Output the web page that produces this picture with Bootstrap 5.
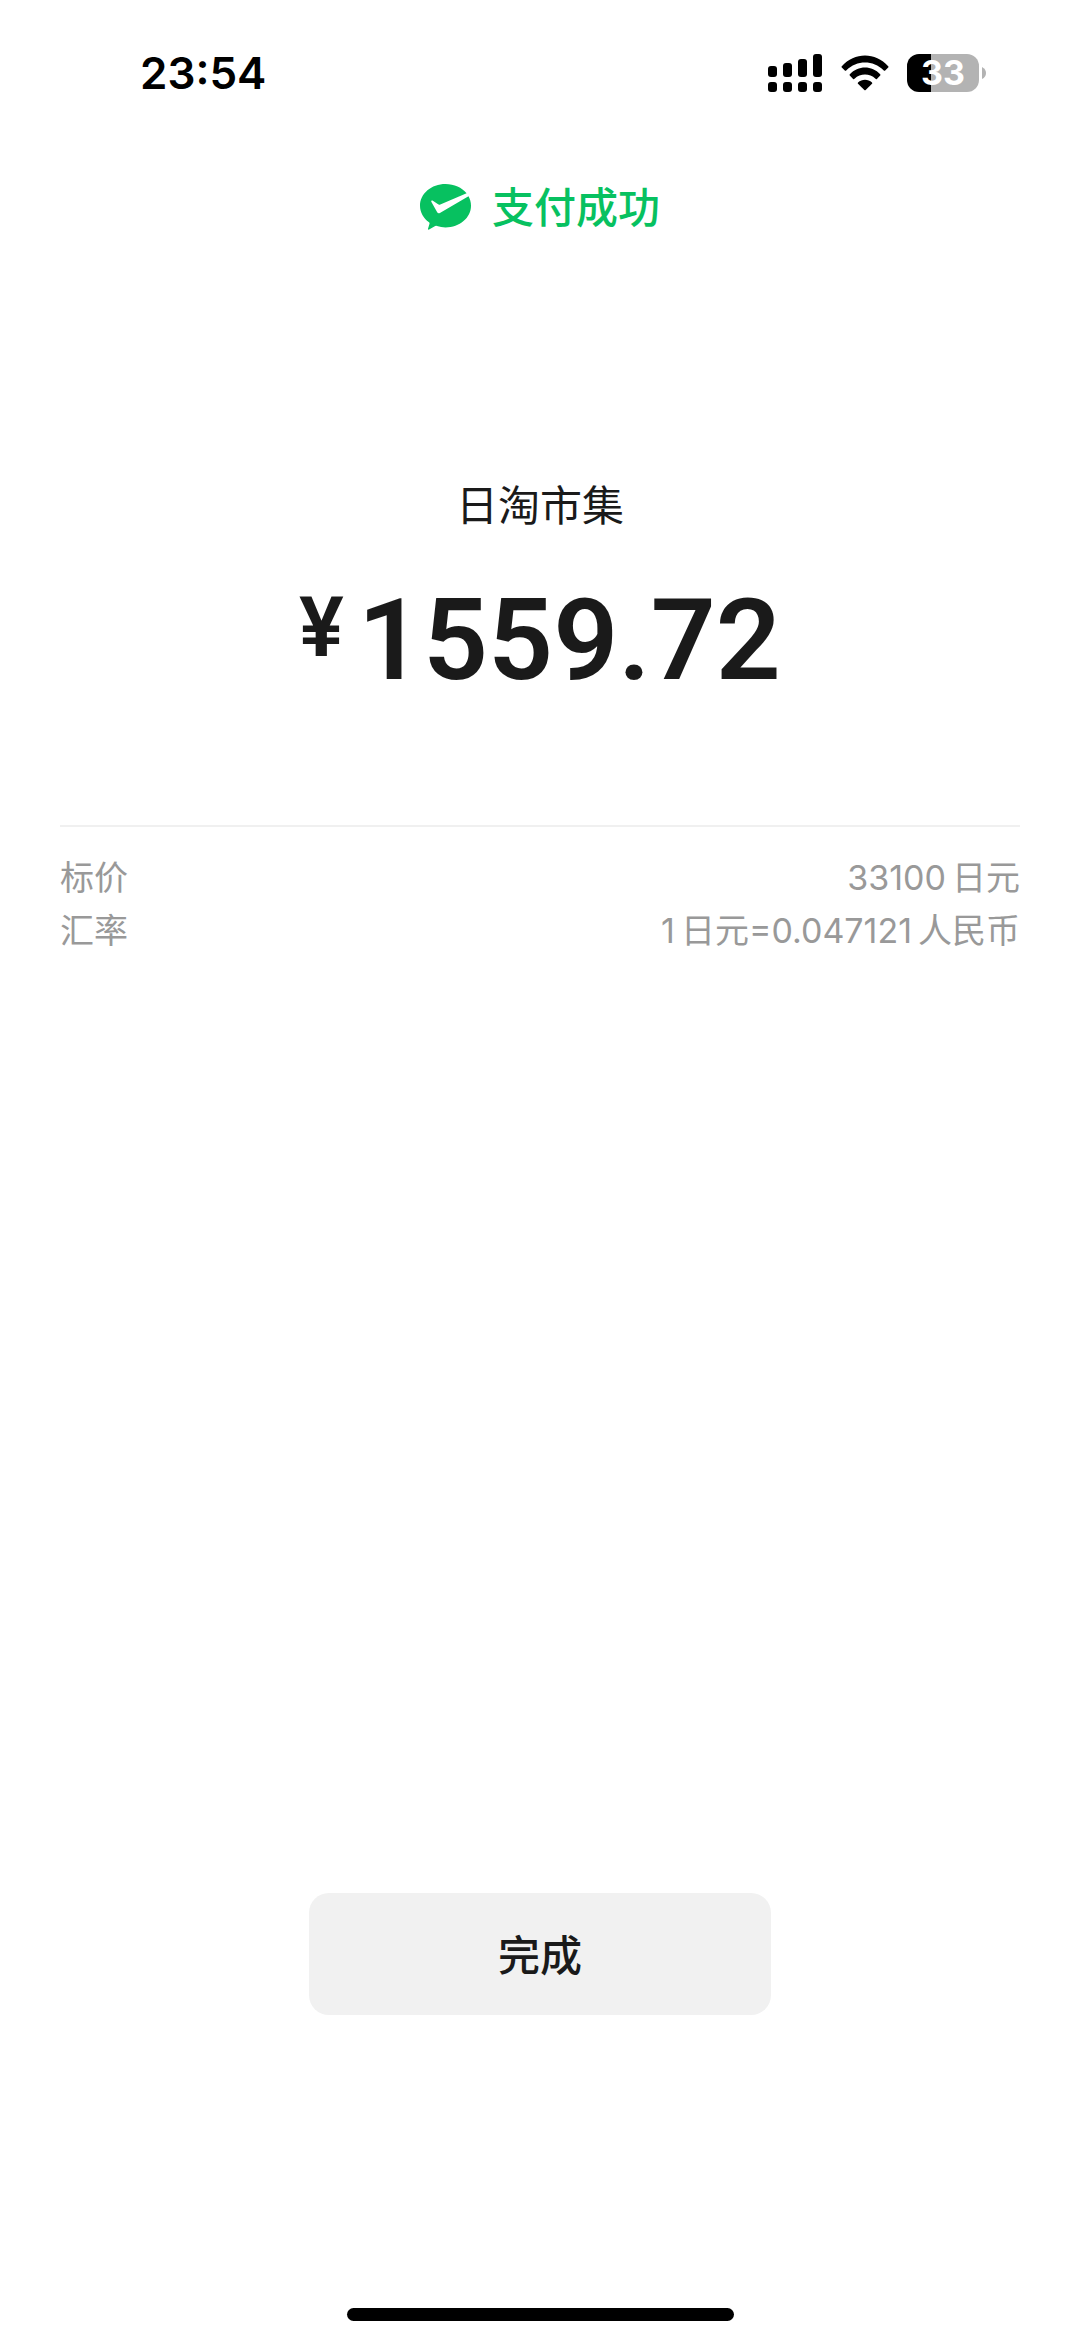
<!DOCTYPE html>
<html lang="zh-CN">
<head>
<meta charset="utf-8">
<meta name="viewport" content="width=device-width, initial-scale=1">
<title>支付成功</title>
<link href="https://cdn.jsdelivr.net/npm/bootstrap@5.3.0/dist/css/bootstrap.min.css" rel="stylesheet">
<style>
  body { font-family: Inter, "Noto Sans CJK SC", sans-serif; color: #1a1a1a; background: #fff; }
  .status-bar { height: 146px; padding: 0 94px 0 140px; color: #000; }
  .status-time { font-size: 44px; line-height: 60px; font-weight: 600; }
  .status-icons { gap: 18px; }
  .battery-cell { width: 72px; height: 38px; border-radius: 12px; color: #fff; font-size: 34px; line-height: 38px; font-weight: 700;
    background: linear-gradient(90deg, #000 24px, #b3b3b3 24px); }
  .pay-state { margin-top: 32px; gap: 21px; color: #07c160; font-size: 42px; line-height: 60px; font-weight: 500; }
  .pay-state svg { margin-bottom: 3px; }
  .merchant { margin-top: 238px; font-size: 42px; line-height: 60px; font-weight: 400; }
  .amount { margin-top: 42px; gap: 14px; font-family: Roboto, sans-serif; font-weight: 600; }
  .amount-sign { font-size: 84px; line-height: 100px; }
  .amount-value { font-size: 114px; line-height: 124px; }
  .pay-details { margin: 123px 60px 0; padding-top: 24px; border-top: 2px solid #f0f0f0; color: #999; font-size: 34px; line-height: 53px; }
  .pay-details dt, .pay-details dd { font-weight: 400; margin: 0; }
  .pay-details dd { display: flex; gap: 6px; }
  .btn-done { width: 462px; height: 122px; margin-bottom: 293px; padding: 8px 0 4px; border: 0; border-radius: 20px; font-size: 42px; line-height: 60px; font-weight: 500;
    --bs-btn-bg: #f1f1f1; --bs-btn-color: #1a1a1a; --bs-btn-hover-bg: #e6e6e6; --bs-btn-active-bg: #dedede; }
  .home-bar { width: 387px; height: 13px; margin-bottom: 20px; background: #000; }
</style>
</head>
<body>
<div class="d-flex flex-column min-vh-100">
  <header class="status-bar d-flex align-items-center justify-content-between">
    <time class="status-time">23:54</time>
    <div class="status-icons d-flex align-items-center">
      <svg width="55" height="38" viewBox="0 0 55 38" role="img" aria-label="信号">
        <rect x="0" y="12" width="9" height="11" rx="3"/><rect x="15" y="9" width="9" height="14" rx="3"/>
        <rect x="30" y="5" width="9" height="18" rx="3"/><rect x="45" y="0" width="9" height="23" rx="3"/>
        <rect x="0" y="28" width="9" height="10" rx="3"/><rect x="15" y="28" width="9" height="10" rx="3"/>
        <rect x="30" y="28" width="9" height="10" rx="3"/><rect x="45" y="28" width="9" height="10" rx="3"/>
      </svg>
      <svg width="48" height="38" viewBox="0 0 48 38" role="img" aria-label="无线网络">
        <path d="M.8 12.2C13.500-2.100 34.500-2.100 47.200 12.200Q47.800 12.900 47.200 13.500L44.200 16.500Q43.500 17 42.800 16.400C32 5.800 16 5.800 5.200 16.400Q4.500 17 3.800 16.500L.8 13.500Q.2 12.900 .8 12.200Z"/>
        <path d="M8.800 20.300C17 11.300 31 11.300 39.200 20.300Q39.800 21 39.200 21.600L35.900 24.900Q35.200 25.400 34.500 24.800C28.500 19.200 19.500 19.200 13.500 24.800Q12.800 25.400 12.100 24.900L8.800 21.600Q8.200 21 8.800 20.300Z"/>
        <path d="M17 28.400C21 24.800 27 24.800 31 28.400Q31.600 29.100 31 29.700L24.700 36Q24 36.600 23.300 36L17 29.700Q16.400 29.100 17 28.400Z"/>
      </svg>
      <div class="d-flex align-items-center">
        <div class="battery-cell text-center">33</div>
        <svg width="7" height="12" viewBox="0 0 7 12" aria-hidden="true"><path d="M3 0Q7 2 7 6Q7 10 3 12Z" fill="#b3b3b3"/></svg>
      </div>
    </div>
  </header>

  <main class="flex-grow-1 d-flex flex-column">
    <div class="pay-state d-flex align-items-center justify-content-center">
      <svg width="51" height="46" viewBox="0 0 51 46" aria-hidden="true">
        <path fill="currentColor" d="M25.500 0C11.400 0 0 9.700 0 21.700C0 28.300 3.500 34.200 9 38.200Q9.700 38.800 9.500 39.700L8 44.800Q7.900 46.100 9.100 45.600L15.200 42.100Q16 41.700 17 42Q21 43.400 25.500 43.400C39.600 43.400 51 33.700 51 21.700C51 18.300 50.100 15.100 48.500 12.300L19.900 28.900Q18.200 29.900 17.200 28.200L11.300 17.700Q10.900 16.100 12.500 16.600L18.100 20.300Q19.100 20.900 20.300 20.400L46.600 9.300C41.900 3.600 34.200 0 25.500 0Z"/>
      </svg>
      <span>支付成功</span>
    </div>
    <h1 class="merchant mb-0 text-center">日淘市集</h1>
    <div class="amount d-flex align-items-start justify-content-center">
      <span class="amount-sign">¥</span>
      <span class="amount-value">1559.72</span>
    </div>
    <dl class="pay-details">
      <div class="d-flex justify-content-between"><dt>标价</dt><dd><span>33100</span><span>日元</span></dd></div>
      <div class="d-flex justify-content-between"><dt>汇率</dt><dd><span>1</span><span>日元=0.047121</span><span>人民币</span></dd></div>
    </dl>
    <button type="button" class="btn btn-done mt-auto align-self-center">完成</button>
  </main>
  <div class="home-bar rounded-pill align-self-center"></div>
</div>
<script src="https://cdn.jsdelivr.net/npm/bootstrap@5.3.0/dist/js/bootstrap.bundle.min.js"></script>
</body>
</html>
